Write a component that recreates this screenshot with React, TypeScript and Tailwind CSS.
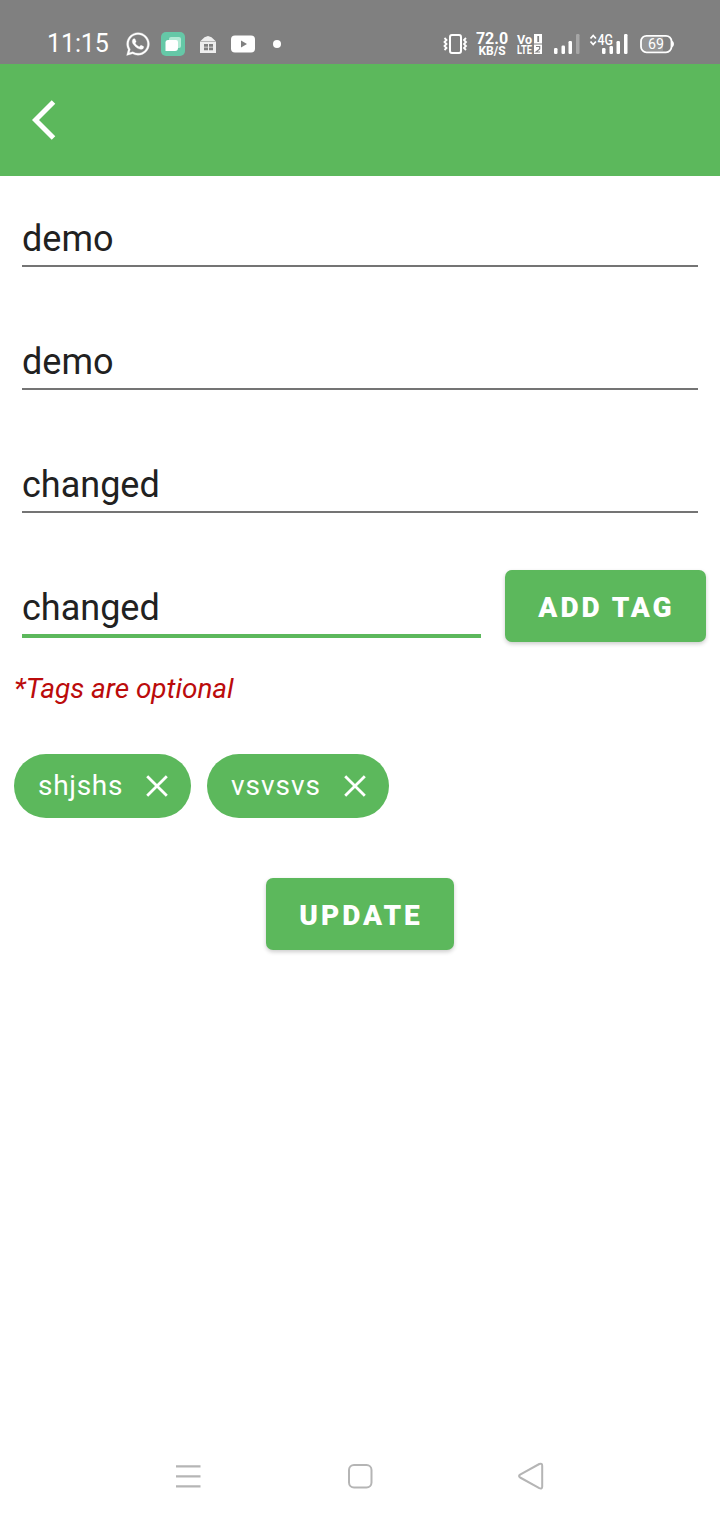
import React from "react";
import { FaWhatsapp } from "react-icons/fa";

function StatusBar() {
  return (
    <header className="flex h-16 items-start bg-[#808080] pt-6 text-white">
      <div className="flex h-10 w-[79px] items-center pl-[47px]">
        <span className="whitespace-nowrap text-[25px] leading-10 tracking-[-0.1px]">11:15</span>
      </div>
      <div className="flex h-10 w-12 shrink-0 items-center pl-[46px]">
        <FaWhatsapp className="h-[26px] w-[26px] shrink-0" stroke="white" strokeWidth={6} />
      </div>
      <svg className="ml-[28px] h-10 w-[130px] shrink-0" viewBox="155 24 130 40" fill="#fff">
        <rect x="161" y="32" width="24" height="24" rx="5" fill="#65c8a7" />
        <rect x="169" y="37" width="12" height="11" rx="2" fill="#b2ead5" />
        <path d="M168 40h8a2 2 0 0 1 2 2v6q0 3-3 3h-9.500v-8.500q0-2.500 2.500-2.500z" />
        <path fill="#eee" d="M200 41.500h16v11.500h-16zM200.500 41 204.500 37.300 208 36l3.500 1.300 4 3.700z" />
        <path fill="#808080" d="M204 44h4v2.700h-4zM209 44h4v2.700h-4zM204 47.500h4v2.700h-4zM209 47.500h4v2.700h-4z" />
        <rect x="231" y="35.500" width="24" height="17" rx="4" />
        <path fill="#808080" d="M241 40.500v7l6-3.500z" />
        <circle cx="277" cy="44" r="4" />
      </svg>
      <svg className="ml-[155px] h-10 w-[32px] shrink-0" viewBox="440 24 32 40" fill="none" stroke="#fff" strokeWidth="2">
        <rect x="450" y="35" width="11" height="18" rx="2" />
        <path strokeWidth="1.800" d="m444.500 38 2 2-2 2 2 2-2 2 2 2-2 2M466 38l-2 2 2 2-2 2 2 2-2 2 2 2" />
      </svg>
      <div className="ml-1 flex w-[32px] shrink-0 flex-col items-center pt-[8px] font-bold">
        <span className="text-[16px] leading-[14px]">72.0</span>
        <span className="text-[12px] leading-[11px]">KB/S</span>
      </div>
      <svg className="ml-[6px] h-10 w-[166px] shrink-0" viewBox="514 24 166 40" fill="#fff">
        <text x="517" y="43.500" fontSize="12.500" fontWeight="700" textLength="15" lengthAdjust="spacingAndGlyphs">Vo</text>
        <text x="517" y="54" fontSize="12.500" fontWeight="700" textLength="15" lengthAdjust="spacingAndGlyphs">LTE</text>
        <rect x="534" y="34" width="8" height="9.500" />
        <rect x="534" y="44.500" width="8" height="9.500" />
        <path d="M538.200 36v6" stroke="#808080" strokeWidth="1.800" fill="none" />
        <path d="M536 46.500h3.700v2.500l-3.700 3h4" stroke="#808080" strokeWidth="1.200" fill="none" />
        <rect x="554" y="48" width="3.500" height="6" rx="1.200" />
        <rect x="561.500" y="45.500" width="3.500" height="8.500" rx="1.200" />
        <rect x="568.500" y="41" width="3.500" height="13" rx="1.200" />
        <rect x="576" y="34" width="3.500" height="20" rx="1.200" fill="#a6a6a6" />
        <path fill="none" stroke="#fff" strokeWidth="1.800" d="m590.500 38.500 2.700-3 2.700 3M590.500 41.500l2.700 3 2.700-3" />
        <text x="597.500" y="45" fontSize="14" fontWeight="500" textLength="15.500" lengthAdjust="spacingAndGlyphs">4G</text>
        <rect x="602" y="48" width="3.500" height="6" rx="1.200" />
        <rect x="609.500" y="46" width="3.500" height="8" rx="1.200" />
        <rect x="616.500" y="41" width="3.500" height="13" rx="1.200" />
        <rect x="624" y="34" width="3.500" height="20" rx="1.200" />
        <path fill="#969696" d="M646 37h17v14h-17q-4 0-4-4v-6q0-4 4-4z" />
        <rect x="641" y="35.800" width="30.500" height="16.500" rx="5.500" fill="none" stroke="#fff" strokeWidth="1.800" />
        <path d="M672 40.500q2 1 2 3.500t-2 3.500z" />
        <text x="648" y="49" fontSize="14" textLength="16" lengthAdjust="spacingAndGlyphs">69</text>
      </svg>
    </header>
  );
}

function Field({ value }: { value: string }) {
  return (
    <div className="mb-[77px] h-[46px] border-b-2 border-[#747474] text-[36px] leading-[36px] text-[#212121]">
      {value}
    </div>
  );
}

function Chip({ label, className }: { label: string; className: string }) {
  return (
    <div
      className={
        "flex h-16 items-center justify-between rounded-full bg-[#5cb85c] pl-6 pr-[22px] text-[28px] text-white " +
        className
      }
    >
      <span>{label}</span>
      <svg className="h-6 w-6" viewBox="0 0 24 24" fill="none" stroke="#fff" strokeWidth="2.800">
        <path d="m2.200 2.200 19.600 19.600M21.800 2.200l-19.600 19.600" />
      </svg>
    </div>
  );
}

const button =
  "flex h-[72px] items-center justify-center rounded-[7px] bg-[#5cb85c] pt-[3px] pl-[2px] text-[28px] font-black tracking-[3px] text-white shadow-[0_2px_4px_rgba(0,0,0,0.2)]";

export default function App() {
  return (
    <div className="flex h-[1520px] w-[720px] flex-col overflow-hidden bg-white font-['Roboto',sans-serif]">
      <StatusBar />
      <nav className="flex h-28 items-center bg-[#5cb85c] pl-8">
        <svg className="h-10 w-6" viewBox="0 0 24 40" fill="none" stroke="#fff" strokeWidth="5">
          <path d="M21.500 2 3.500 20l18 18" />
        </svg>
      </nav>
      <main className="flex grow flex-col">
        <div className="px-[22px] pt-[45px]">
          <Field value="demo" />
          <Field value="demo" />
          <Field value="changed" />
        </div>
        <div className="-mt-5 flex h-[72px] pl-[22px]">
          <div className="mt-5 h-12 w-[459px] border-b-4 border-[#5cb85c] text-[36px] leading-[36px] text-[#212121]">
            changed
          </div>
          <button className={button + " ml-6 w-[201px]"}>ADD TAG</button>
        </div>
        <p className="mt-[30px] pl-[14px] text-[28px] italic leading-[33px] tracking-[-0.04px] text-[#bb0b0b]">*Tags are optional</p>
        <div className="mt-[49px] flex gap-4 pl-[14px]">
          <Chip label="shjshs" className="w-[177px] tracking-[0.7px]" />
          <Chip label="vsvsvs" className="w-[182px] tracking-[1px]" />
        </div>
        <button className={button + " mt-[60px] w-[188px] self-center"}>UPDATE</button>
      </main>
      <footer className="flex h-[88px] items-center justify-between pl-[174px] pr-[174px] text-[#b5b5b5]">
        <svg className="h-7 w-7" viewBox="0 0 28 28" fill="none" stroke="currentColor" strokeWidth="2.200">
          <path d="M2 4.300h24.500M2 14.300h24.500M2 24.300h24.500" />
        </svg>
        <svg className="h-7 w-7" viewBox="0 0 28 28" fill="none" stroke="currentColor" strokeWidth="2">
          <rect x="3" y="3" width="22.500" height="22.500" rx="5" />
        </svg>
        <svg className="h-7 w-7" viewBox="0 0 28 28" fill="none" stroke="currentColor" strokeWidth="2" strokeLinejoin="round">
          <path d="M2.100 12.600 21.300 2q2.900-1 2.900 1.800v20.600q0 2.900-2.900 1.700L2.100 15.500q-2.100-1.400 0-2.900z" />
        </svg>
      </footer>
    </div>
  );
}
